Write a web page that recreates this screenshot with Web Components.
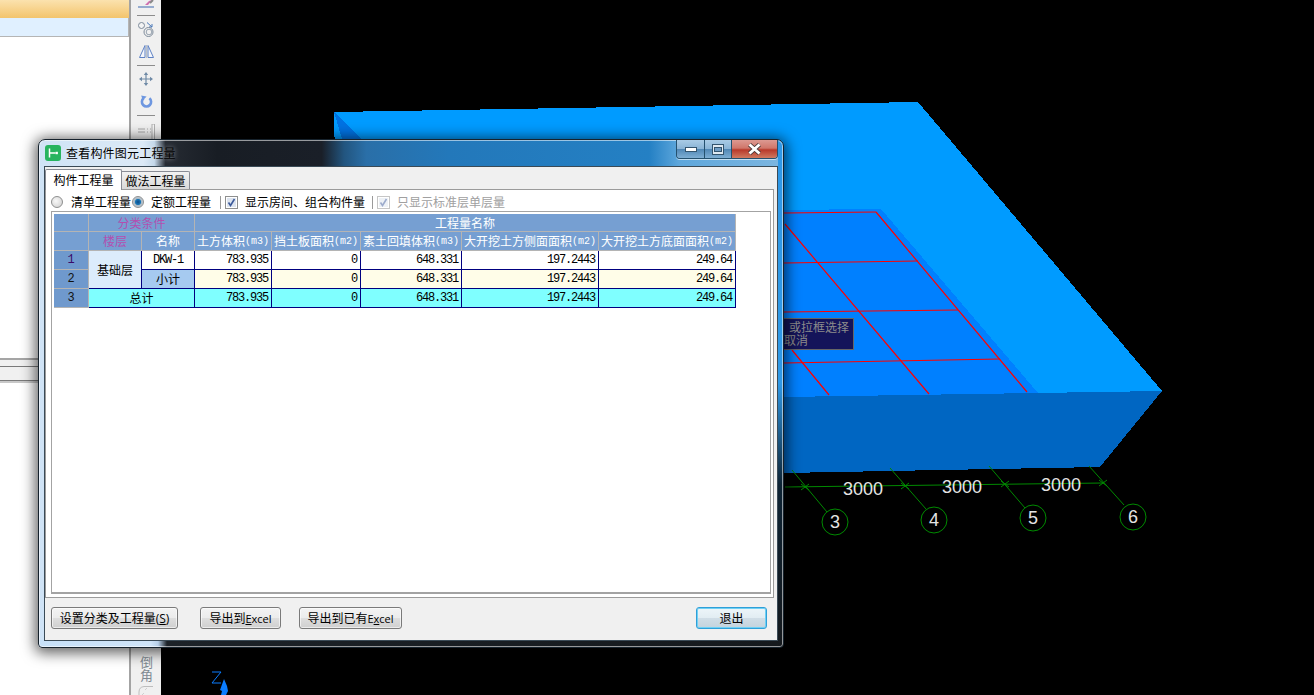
<!DOCTYPE html>
<html lang="zh">
<head>
<meta charset="utf-8">
<title>查看构件图元工程量</title>
<style>
html,body{margin:0;padding:0;background:#000;overflow:hidden}
body{font:12px "Noto Sans CJK SC","Liberation Sans",sans-serif}
</style>
</head>
<body>
<x-desktop></x-desktop>
<script>
const CJK='"Noto Sans CJK SC","Liberation Sans",sans-serif';
const MONO='"Liberation Mono","DejaVu Sans Mono",monospace';
function def(name,html,extra){
  customElements.define(name,class extends HTMLElement{
    constructor(){super();this.attachShadow({mode:'open'}).innerHTML=html;if(extra)extra(this.shadowRoot,this);}
  });
}

def('x-side-panel',`<style>
:host{display:flex;flex-direction:column;width:129px;height:695px;background:#fff;border-right:2px solid #a3a3a3;box-sizing:content-box}
.a{height:18px;background:linear-gradient(#fbe2ae,#f3c46c)}
.b{height:18px;background:#e0f0ff;border-bottom:1px solid #b5b5b5;border-right:1px solid #b5b5b5}
.c{height:321px}
.s2{box-sizing:border-box;background:#f0f0f0}
</style><div class="a"></div><div class="b"></div><div class="c"></div>
<div class="s2" style="border-top:2px solid #a5a5a5;border-bottom:1px solid #7a7a7a;height:9px"></div>
<div class="s2" style="height:14px;border-bottom:1px solid #7a7a7a"></div><div style="height:2px;background:#c8c8c8"></div>`);

def('x-toolbar',`<style>
:host{display:flex;flex-direction:column;align-items:center;width:30px;height:695px;background:#f0f0f0;color:#7f8a92;font:13px/13px ${CJK}}
hr{width:18px;height:1px;border:0;background:#8c8c8c;margin:0;flex:none}
svg{display:block;flex:none}
.bottom{margin-top:auto;display:flex;flex-direction:column;align-items:center}
.v{writing-mode:vertical-rl;text-orientation:upright;line-height:16px;height:26px}
</style>
<svg width="20" height="8" viewBox="0 0 20 8" style="margin-bottom:7px"><path d="M2 7H18" stroke="#6f8fc0" stroke-width="1.4"/><path d="M9 5 13 1 16 0 12 5Z" fill="#d070b0"/><path d="M14 3 17 0" stroke="#888" stroke-width="2"/></svg>
<hr>
<svg width="16" height="15" viewBox="0 0 16 15" style="margin-top:6px"><circle cx="3.5" cy="3.5" r="3" fill="#f4f4f4" stroke="#7d8a9a"/><path d="M9 0.5 14 5M14 2V5H11" fill="none" stroke="#4a78b8"/><circle cx="10.5" cy="10" r="4.5" fill="none" stroke="#7d8a9a"/><circle cx="11" cy="10" r="2.8" fill="none" stroke="#98a4b0"/></svg>
<svg width="15" height="13" viewBox="0 0 15 13" style="margin-top:8px"><path d="M6 .5V12.5H.5ZM9 .5V12.5H14.5Z" fill="#f4f6fb" stroke="#5f82c4"/><path d="M7.5 0V13" stroke="#a5aeb5" stroke-width=".7"/></svg>
<hr style="margin-top:7px">
<svg width="14" height="14" viewBox="0 0 14 14" style="margin-top:6px"><path d="M7 2V12M2 7H12" stroke="#6f8aa6" stroke-width="1.2"/><path d="M7 0 9.2 3H4.8ZM7 14 4.8 11H9.2ZM0 7 3 4.8V9.2ZM14 7 11 9.2V4.8Z" fill="#6f8aa6"/></svg>
<svg width="13" height="13" viewBox="0 0 13 13" style="margin-top:9px"><path d="M3.6 3.3A4.6 4.6 0 1 0 9.4 3.3" fill="none" stroke="#6e97e0" stroke-width="2.6"/><path d="M1.2 .6 6.6 1.4 2.8 5.4Z" fill="#6e97e0"/></svg>
<hr style="margin-top:7px">
<svg width="20" height="16" viewBox="0 0 20 16" style="margin-top:8px"><path d="M2 5H9M2 8H9M11 5H12M11 8H12M14 5H15M14 8H15" stroke="#a8a8a8"/><rect x="16" y="0" width="2.5" height="16" fill="#f6f6f6" stroke="#b0b0b0"/></svg>
<div class="bottom"><span class="v">倒角</span>
<svg width="18" height="9" viewBox="0 0 18 9" style="margin-top:4px"><path d="M2 9V6Q2 1 7 .5H16" fill="none" stroke="#bdbdbd"/><path d="M5 9 7 7M8 4 10 2" stroke="#cfcfcf"/></svg></div>`);

def('x-scene',`<style>
:host{display:block;flex:1;height:695px;background:#000;overflow:hidden}
svg{display:block}
polygon.f{shape-rendering:crispEdges}
text{font-family:"Liberation Sans",sans-serif;fill:#e4e4e4}
.d{font-size:18px}.n{font-size:18px}
</style>
<svg width="1153" height="695" viewBox="161 0 1153 695">
<polygon class="f" points="334,112 918,102 1162,391 784,397 340,400" fill="#009bff"/>
<polygon class="f" points="334,112 362,139 342,139" fill="#0072e2"/>
<polygon class="f" points="360,214 881,209 1038,393 784,397 360,400" fill="#0080ff"/>
<polygon class="f" points="1162,391 1100,467 784,473 360,480 360,397 784,397" fill="#0066c2"/>
<g fill="none" stroke="#f00" stroke-width="1.2">
<path d="M784 213 876 212M784 263 918 261M784 312 958 310M784 363 1000 359"/>
<path d="M876 212 1027 392M785 224 929 394M792 350 829 395"/>
</g>
<g fill="none" stroke="#008a00">
<path d="M785 487 1103 483"/>
<path d="M792 470 827 512M890 468 926 509M989 466 1025 508M1089 466 1124 505"/>
<path d="M801 484 809 490M801 490 809 484M901 483 909 489M901 489 909 483M1001 481 1009 487M1001 487 1009 481M1099 480 1107 486M1099 486 1107 480"/>
<circle cx="835" cy="522" r="13"/><circle cx="934" cy="520" r="13"/><circle cx="1033" cy="518" r="13"/><circle cx="1133" cy="517" r="13"/>
</g>
<text class="d" x="843" y="495">3000</text>
<text class="d" x="942" y="493">3000</text>
<text class="d" x="1041" y="491">3000</text>
<text class="n" x="830" y="528">3</text>
<text class="n" x="929" y="526">4</text>
<text class="n" x="1028" y="524">5</text>
<text class="n" x="1128" y="523">6</text>
<path d="M212 672H221L212 683H221" fill="none" stroke="#0a7cff"/>
<path d="M224 679 227 686 228 691 226 695H221L222 691 220 690Z" fill="#0a7cff"/>
</svg>`);

def('x-tip',`<style>
:host{position:absolute;left:700px;top:318px;width:154px;height:32px;box-sizing:border-box;border:1px solid #666;background:#14145a;color:#8c8c8c;padding:1px 0 0 83px;font:12px/13px ${CJK};text-indent:5px;white-space:pre-line}
</style><slot></slot>`);

def('x-caption',`<style>
:host{display:flex;height:19px;margin-left:auto;margin-right:0;box-sizing:border-box;border:1px solid #24506e;border-top:0;border-radius:0 0 4px 4px;box-shadow:0 1px 0 rgba(255,255,255,.6);overflow:hidden}
div{display:flex;align-items:center;justify-content:center;height:100%;box-sizing:border-box}
.m{width:28px;border-right:1px solid #24506e;background:linear-gradient(#a9cbe6 0,#8ab4d6 48%,#4f86b4 50%,#7eaed4 100%)}
.r{width:27px;background:linear-gradient(#a9cbe6 0,#8ab4d6 48%,#4f86b4 50%,#7eaed4 100%);border-right:1px solid #24506e}
.x{width:45px;background:linear-gradient(#dc9a92 0,#d0766a 45%,#b8392a 55%,#d07a60 100%)}
</style>
<div class="m"><svg width="12" height="6" viewBox="0 0 12 6"><rect x=".5" y="1.5" width="11" height="4" fill="#fff" stroke="#33546e"/></svg></div>
<div class="r"><svg width="12" height="11" viewBox="0 0 12 11"><rect x=".5" y=".5" width="11" height="10" fill="#dfe9f2" stroke="#33546e"/><rect x="2.5" y="3.5" width="7" height="4" fill="#6f9cc4" stroke="#33546e"/></svg></div>
<div class="x"><svg width="15" height="12" viewBox="0 0 15 12"><path d="M2.5 1.5 12.5 10.5M12.5 1.5 2.5 10.5" stroke="#4a3a3a" stroke-width="4.4"/><path d="M2.5 1.5 12.5 10.5M12.5 1.5 2.5 10.5" stroke="#fff" stroke-width="2.8"/></svg></div>`);

def('x-radio',`<style>
:host{display:inline-flex;align-items:center;color:#000}
i{display:block;width:12px;height:12px;box-sizing:border-box;border-radius:50%;border:1px solid #8e8f8f;background:radial-gradient(circle at 40% 40%,#f8f8f8,#cdcdcd);margin-right:8px;flex:none}
:host([on]) i{background:radial-gradient(circle,#0a4a8a 0,#1a78b8 38%,#a9b8c4 50%,#e4e8ec 100%);margin-right:7px}
</style><i></i><slot></slot>`);

def('x-check',`<style>
:host{display:inline-flex;align-items:center;color:#000}
svg{display:block;width:13px;height:13px;margin-right:7px;flex:none}
:host([off]) svg{opacity:.5}
:host([off]){color:#a0a0a0}
</style><svg viewBox="0 0 13 13"><rect x=".5" y=".5" width="12" height="12" fill="#fff" stroke="#8e8f8f"/><rect x="2" y="2" width="9" height="9" fill="#dde4ef"/><path d="M3.5 6.5 5.5 9.5 9.5 3" fill="none" stroke="#3c5a9a" stroke-width="1.6"/></svg><slot></slot>`);

def('x-btn',`<style>
:host{display:flex;align-items:center;justify-content:center;height:22px;box-sizing:border-box;border:1px solid #7a7a7a;border-radius:3px;background:linear-gradient(#f3f3f3 0,#ececec 48%,#dedede 52%,#cfcfcf 100%);color:#000;font:12px/14px ${CJK};white-space:nowrap;box-shadow:inset 0 0 0 1px rgba(255,255,255,.6)}
:host([primary]){border:1px solid #2f9fd8;background:linear-gradient(#edf5f9 0,#e2edf3 48%,#d0dde6 52%,#c4d3dd 100%);box-shadow:inset 0 0 0 1px #6fd0f4}
::slotted(span){font:11px "Open Sans","Liberation Sans",sans-serif}
</style><slot></slot>`);

const cols=[35,53,53,77,89,101,137,137];
function unit(s,u){return s+`<span class="u">(${u})</span>`}
const cells=[
 ['h','',1,1,1,1],['h m','分类条件',1,2,1,2],['h','工程量名称',1,4,1,5],
 ['h','',2,1,1,1],['h m','楼层',2,2,1,1],['h','名称',2,3,1,1],
 ['h',unit('土方体积','m3'),2,4,1,1],['h',unit('挡土板面积','m2'),2,5,1,1],['h',unit('素土回填体积','m3'),2,6,1,1],
 ['h',unit('大开挖土方侧面面积','m2'),2,7,1,1],['h',unit('大开挖土方底面面积','m2'),2,8,1,1],
 ['h r p','1',3,1,1,1],['d f','基础层',3,2,2,1],['d w t','DKW-1',3,3,1,1],
 ['d w n','783.935',3,4,1,1],['d w n','0',3,5,1,1],['d w n','648.331',3,6,1,1],['d w n','197.2443',3,7,1,1],['d w n','249.64',3,8,1,1],
 ['h r','2',4,1,1,1],['d s','小计',4,3,1,1],
 ['d y n','783.935',4,4,1,1],['d y n','0',4,5,1,1],['d y n','648.331',4,6,1,1],['d y n','197.2443',4,7,1,1],['d y n','249.64',4,8,1,1],
 ['h r','3',5,1,1,1],['d c','总计',5,2,1,2],
 ['d c n','783.935',5,4,1,1],['d c n','0',5,5,1,1],['d c n','648.331',5,6,1,1],['d c n','197.2443',5,7,1,1],['d c n','249.64',5,8,1,1]
];
def('x-grid',`<style>
:host{display:grid;grid-template-columns:${cols.map(c=>c+'px').join(' ')};grid-template-rows:18px 19px 19px 19px 19px;width:682px;font:12px ${CJK};align-self:flex-start}
div{display:flex;align-items:center;justify-content:center;box-sizing:border-box;white-space:nowrap;overflow:hidden;line-height:14px}
.h{background:#769fd2;color:#fff;border-right:1px solid #b4b4b4;border-bottom:1px solid #b4b4b4}
.m{color:#b24fb0}
.r{background:#6f99cd;color:#111;font:12px ${MONO}}
.p{color:#3a0a6a}
.d{border-right:1px solid #000080;border-bottom:1px solid #000080;color:#000;background:#fff}
.f{background:#dcecfc}.s{background:#a6caf0}.y{background:#fffde8}.c{background:#7fffff}
.n{justify-content:flex-end;padding-right:3px;font:12px ${MONO};letter-spacing:-1.2px}
.t{font:12px ${MONO};letter-spacing:-1.2px}
.u{font:10px ${MONO}}
</style>`+cells.map(c=>`<div class="${c[0]}" style="grid-row:${c[2]}/span ${c[4]};grid-column:${c[3]}/span ${c[5]}">${c[1]}</div>`).join(''));

def('x-tabs',`<style>
:host{display:flex;align-items:flex-end;height:20px;padding-top:2px;font:12px/14px ${CJK};color:#000;position:relative;z-index:1}
div{display:flex;align-items:center;justify-content:center;box-sizing:border-box}
.a{width:77px;height:21px;margin-bottom:-1px;background:#fff;border:1px solid #898c95;border-bottom:0;border-radius:2px 2px 0 0}
.b{width:68px;height:18px;background:linear-gradient(#f2f2f2,#d9d9d9);border:1px solid #898c95;border-left:0;border-bottom:0;border-radius:0 2px 0 0}
</style><div class="a">构件工程量</div><div class="b">做法工程量</div>`);

def('x-dialog',`<style>
:host{position:absolute;left:38px;top:139px;width:746px;height:509px;box-sizing:border-box;display:flex;flex-direction:column;padding:0 5px 6px;border:1px solid #16222c;border-radius:7px 7px 4px 4px;font:12px/14px ${CJK};
 box-shadow:0 2px 14px 3px rgba(0,0,0,.62),inset 0 0 0 1px rgba(255,255,255,.55);
 background:
  linear-gradient(#2f98e6 0,#2f98e6 48%,#0d2334 68%,#15191d 100%) right top/5px 100% no-repeat,
  linear-gradient(90deg,#c6e0f8 0,#cfe4f8 15%,#b7cfe8 16%,#1c2228 17.2%,#15191d 100%) left bottom/100% 7px no-repeat,
  linear-gradient(90deg,#cfe3f6 0,#dbe9f6 14%,#c4d8ea 15.5%,#262b33 17%,#181d24 24%,#1a1f28 38%,#22557f 41%,#2a6fa8 44%,#2378ba 55%,#2480c4 82%,#5ea7dc 86%,#7db6e0 100%)}
.title{display:flex;align-items:flex-start;height:26px;flex:none}
.ico{display:block;margin:5px 5px 0 1px;flex:none}
.cap{margin-top:6px;font-size:12px;letter-spacing:.2px;color:#000;text-shadow:0 0 5px rgba(255,255,255,.55)}
.client{flex:1;display:flex;flex-direction:column;min-height:0;background:#f0f0f0;border:1px solid #3a4a56}
.panel{flex:1;display:flex;flex-direction:column;min-height:0;margin-right:3px;background:#fff;border:1px solid #9b9b9b}
.opts{display:flex;align-items:center;height:21px;flex:none;padding-left:5px;color:#000;box-sizing:border-box;padding-top:3px}
.sep{width:1px;height:13px;background:#9a9a9a;flex:none}
.frame{flex:1;display:flex;margin:0 2px 3px 5px;padding:2px 0 0 2px;border:1px solid #a3a3a3;border-bottom:2px solid #a3a3a3;min-height:0;background:#fff}
.foot{flex:none;height:42px;display:flex;align-items:flex-start;box-sizing:border-box;padding:9px 10px 0 6px}
</style>
<div class="title">
 <svg class="ico" width="16" height="16" viewBox="0 0 16 16"><rect width="16" height="16" rx="3" fill="#27b45f"/><path d="M4.5 3.5V12.5M4.5 8H10.5" fill="none" stroke="#fff" stroke-width="1.5"/><rect x="10.5" y="6.8" width="2.4" height="2.4" fill="#fff"/></svg>
 <span class="cap">查看构件图元工程量</span>
 <x-caption></x-caption>
</div>
<div class="client">
 <x-tabs></x-tabs>
 <div class="panel">
  <div class="opts">
   <x-radio>清单工程量</x-radio>
   <x-radio on style="margin-left:1px">定额工程量</x-radio>
   <span class="sep" style="margin-left:9px"></span>
   <x-check style="margin-left:4px">显示房间、组合构件量</x-check>
   <span class="sep" style="margin-left:7px"></span>
   <x-check off style="margin-left:4px">只显示标准层单层量</x-check>
  </div>
  <div class="frame"><x-grid></x-grid></div>
 </div>
 <div class="foot">
  <x-btn style="width:127px">设置分类及工程量<span style="font-size:12px">(<u>S</u>)</span></x-btn>
  <x-btn style="width:81px;margin-left:22px">导出到<span><u>E</u>xcel</span></x-btn>
  <x-btn style="width:103px;margin-left:18px">导出到已有<span>E<u>x</u>cel</span></x-btn>
  <x-btn primary style="width:71px;margin-left:auto">退出</x-btn>
 </div>
</div>`);

def('x-desktop',`<style>
:host{display:flex;position:relative;width:1314px;height:695px;overflow:hidden;background:#000}
</style><x-side-panel></x-side-panel><x-toolbar></x-toolbar><x-scene></x-scene><x-tip>或拉框选择
取消</x-tip><x-dialog></x-dialog>`);
</script>
</body>
</html>
